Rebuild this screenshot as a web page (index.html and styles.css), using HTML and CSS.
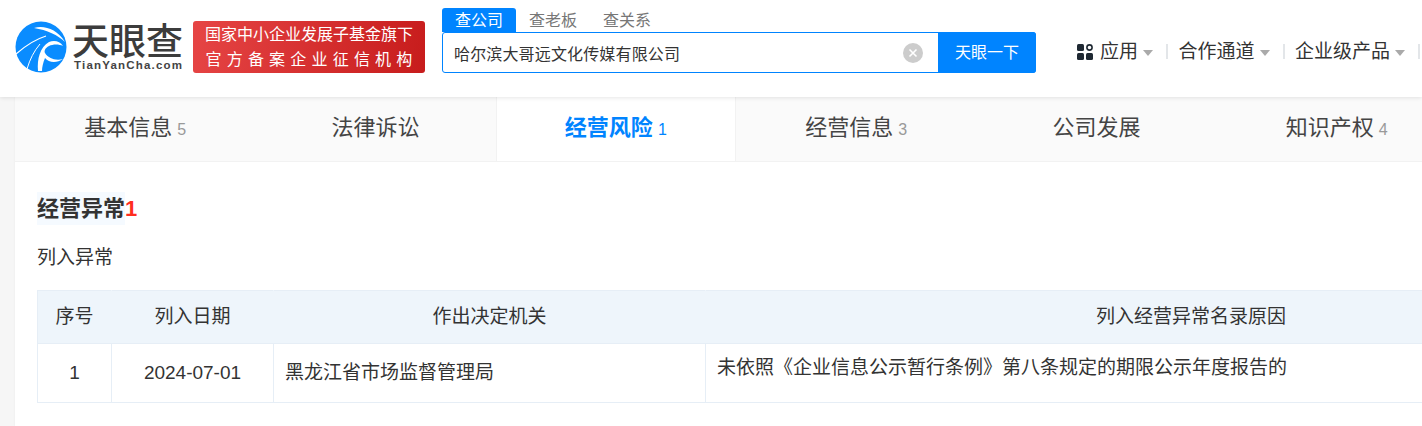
FILE: index.html
```html
<!DOCTYPE html>
<html lang="zh-CN">
<head>
  <meta charset="UTF-8" />
  <meta name="viewport" content="width=device-width, initial-scale=1.0"/>
  <title>天眼查</title>
  <link rel="stylesheet" href="styles.css">
</head>
<body>

  <header class="top">
    <div class="logo">
      <svg class="logo-mark" viewBox="0 0 52 52" width="52" height="52">
        <circle cx="26" cy="26" r="25.5" fill="#0a8cff"/>
        <path d="M19 7C29 4 42 8 50 21C43 14 32 9 19 7Z" fill="#fff"/>
        <path d="M1 33C9 26 18 19 31 15" stroke="#fff" stroke-width="1.2" fill="none"/>
        <path d="M12 48C15 38 19 30 25 23" stroke="#fff" stroke-width="1" fill="none"/>
        <path d="M23 50C22 38 25 26 34 21C39 19 45 20 48 25C44 23 38 23 34 25C30 27 29 30 30 32C33 37 40 40 48 38C42 42 34 42 30 37C28 42 27 46 27 50Z" fill="#fff"/>
      </svg>
      <div class="logo-text">
        <div class="logo-cn">天眼查</div>
        <div class="logo-en">TianYanCha.com</div>
      </div>
    </div>

    <div class="badge">
      <div class="badge-top">国家中小企业发展子基金旗下</div>
      <div class="badge-bottom">官方备案企业征信机构</div>
    </div>

    <div class="search">
      <div class="search-tabs">
        <span class="search-tab active">查公司</span>
        <span class="search-tab">查老板</span>
        <span class="search-tab">查关系</span>
      </div>
      <div class="search-box">
        <div class="search-input">哈尔滨大哥远文化传媒有限公司</div>
        <svg class="search-clear" viewBox="0 0 20 20" width="20" height="20">
          <circle cx="10" cy="10" r="10" fill="#ccc"/>
          <path d="M6.5 6.5L13.5 13.5M13.5 6.5L6.5 13.5" stroke="#fff" stroke-width="1.6"/>
        </svg>
        <div class="search-btn">天眼一下</div>
      </div>
    </div>

    <nav class="nav">
      <div class="nav-item">
        <svg class="nav-icon" viewBox="0 0 16 16" width="16" height="16">
          <rect x="0" y="0" width="7" height="7" rx="1.5" fill="#1f2933"/>
          <circle cx="12.5" cy="3.5" r="2.6" fill="none" stroke="#1f2933" stroke-width="1.6"/>
          <rect x="0" y="9" width="7" height="7" rx="1.5" fill="#1f2933"/>
          <rect x="9" y="9" width="7" height="7" rx="1.5" fill="#1f2933"/>
        </svg>
        应用<i class="caret"></i>
      </div>
      <div class="nav-item">合作通道<i class="caret"></i></div>
      <div class="nav-item">企业级产品<i class="caret"></i></div>
    </nav>
  </header>

  <main class="card">
    <div class="tabs">
      <div class="tab">基本信息<span class="num">5</span></div>
      <div class="tab">法律诉讼</div>
      <div class="tab active">经营风险<span class="num">1</span></div>
      <div class="tab">经营信息<span class="num">3</span></div>
      <div class="tab">公司发展</div>
      <div class="tab">知识产权<span class="num">4</span></div>
    </div>

    <div class="content">
      <h2 class="title"><span class="title-text">经营异常</span><span class="title-num">1</span></h2>
      <div class="subtitle">列入异常</div>

      <table class="list">
        <colgroup>
          <col class="c1"><col class="c2"><col class="c3"><col class="c4">
        </colgroup>
        <thead>
          <tr>
            <th>序号</th>
            <th>列入日期</th>
            <th>作出决定机关</th>
            <th>列入经营异常名录原因</th>
          </tr>
        </thead>
        <tbody>
          <tr>
            <td class="center">1</td>
            <td class="center">2024-07-01</td>
            <td>黑龙江省市场监督管理局</td>
            <td class="reason">未依照《企业信息公示暂行条例》第八条规定的期限公示年度报告的</td>
          </tr>
        </tbody>
      </table>
    </div>
  </main>

</body>
</html>
```

FILE: styles.css
```css
html, body {
  margin: 0;
  padding: 0;
  height: 426px;
  overflow: hidden;
}

body {
  background: #f6f6f6;
  color: #333;
  font-family: "Liberation Sans", Arial, "Noto Sans CJK SC", sans-serif;
  font-size: 16px;
}

.top {
  display: flex;
  height: 97px;
  background: #fff;
  box-shadow: 0 1px 4px rgba(0, 0, 0, 0.1);
  position: relative;
  z-index: 2;
  white-space: nowrap;
}

.logo {
  display: flex;
  margin: 21px 0 0 15px;
  width: 178px;
  flex: none;
}

.logo-mark {
  flex: none;
}

.logo-text {
  margin-left: 5px;
}

.logo-cn {
  font-size: 37px;
  line-height: 36px;
  font-weight: 500;
  color: #3c3c3c;
  font-family: "Noto Sans CJK SC", sans-serif;
}

.logo-en {
  margin: 1px 0 0 2px;
  font-size: 11.5px;
  line-height: 14px;
  font-weight: 700;
  color: #444;
  letter-spacing: 1.2px;
}

.badge {
  flex: none;
  width: 232px;
  height: 52px;
  margin-top: 21px;
  border-radius: 3px;
  background: linear-gradient(100deg, #e64545, #c71c1c);
  color: #fff;
  text-align: center;
  font-size: 16px;
  line-height: 25px;
}

.badge-top {
  padding-top: 1px;
}

.badge-bottom {
  letter-spacing: 5.2px;
  margin-right: -5px;
}

.search {
  flex: none;
  width: 594px;
  margin: 8px 0 0 17px;
}

.search-tabs {
  display: flex;
  height: 24px;
}

.search-tab {
  padding: 0 13px;
  font-size: 16px;
  line-height: 25px;
  color: #777;
}

.search-tab.active {
  background: #0084ff;
  color: #fff;
  border-radius: 3px 3px 0 0;
}

.search-box {
  display: flex;
  align-items: center;
  height: 41px;
  box-sizing: border-box;
  border: 1px solid #0084ff;
  border-radius: 3px;
}

.search-input {
  flex: 1;
  padding-left: 11px;
  font-size: 16px;
  letter-spacing: 0.15px;
  color: #333;
}

.search-clear {
  margin-right: 15px;
}

.search-btn {
  align-self: stretch;
  width: 98px;
  margin: -1px -1px -1px 0;
  background: #0084ff;
  color: #fff;
  font-size: 16px;
  line-height: 41px;
  text-align: center;
  border-radius: 0 3px 3px 0;
}

.nav {
  display: flex;
  margin: 41px 0 0 41px;
  font-size: 19px;
  line-height: 22px;
  height: 22px;
  color: #333;
}

.nav-item {
  display: flex;
  align-items: center;
  padding-right: 15px;
  margin-right: 10.5px;
  position: relative;
}

.nav-item::after {
  content: "";
  position: absolute;
  right: 0;
  top: 3px;
  width: 2px;
  height: 15px;
  background: #e3e6e9;
}

.nav-icon {
  margin-right: 7px;
}

.caret {
  width: 0;
  height: 0;
  margin-left: 5px;
  margin-top: 2px;
  border-left: 5px solid transparent;
  border-right: 5px solid transparent;
  border-top: 6px solid #aaa;
}

.card {
  margin-left: 15px;
  height: 329px;
  background: #fff;
  overflow: hidden;
  box-shadow: 0 0 2px rgba(0, 0, 0, 0.06);
}

.tabs {
  display: flex;
  height: 65px;
  background: #fafafa;
  border-bottom: 1px solid #f2f2f2;
  box-sizing: border-box;
}

.tab {
  flex: none;
  width: 240.33px;
  box-sizing: border-box;
  text-align: center;
  font-size: 22px;
  line-height: 62px;
  color: #444;
}

.tab.active {
  background: #fff;
  color: #0084ff;
  font-weight: 700;
  border-left: 1px solid #f2f2f2;
  border-right: 1px solid #f2f2f2;
}

.num {
  margin-left: 5px;
  font-size: 16px;
  font-weight: 400;
  color: #999;
}

.tab.active .num {
  color: #0084ff;
}

.content {
  padding: 30px 0 0 22px;
}

.title {
  margin: 0;
  font-size: 22px;
  line-height: 33px;
  font-weight: 700;
  color: #333;
}

.title-text {
  display: inline-block;
  background: #f5faff;
}

.title-num {
  color: #ff2e1f;
}

.subtitle {
  margin-top: 20px;
  font-size: 19px;
  line-height: 26px;
  color: #333;
}

.list {
  margin-top: 19px;
  width: 1640px;
  table-layout: fixed;
  border-collapse: collapse;
  font-size: 19px;
  line-height: 26px;
  color: #333;
}

.c1 { width: 74px; }
.c2 { width: 162px; }
.c3 { width: 432px; }

.list th, .list td {
  border: 1px solid #e6eef6;
  box-sizing: border-box;
}

.list th {
  height: 53px;
  padding: 0;
  background: #eef5fb;
  font-weight: 400;
  border-right-color: #eef5fb;
  border-left-color: #eef5fb;
}

.list th:first-child {
  border-left-color: #e6eef6;
}

.list td {
  height: 59px;
  padding: 0 11px;
}

.list td.center {
  text-align: center;
}

.list td.reason {
  vertical-align: top;
  padding-top: 11px;
}
```
